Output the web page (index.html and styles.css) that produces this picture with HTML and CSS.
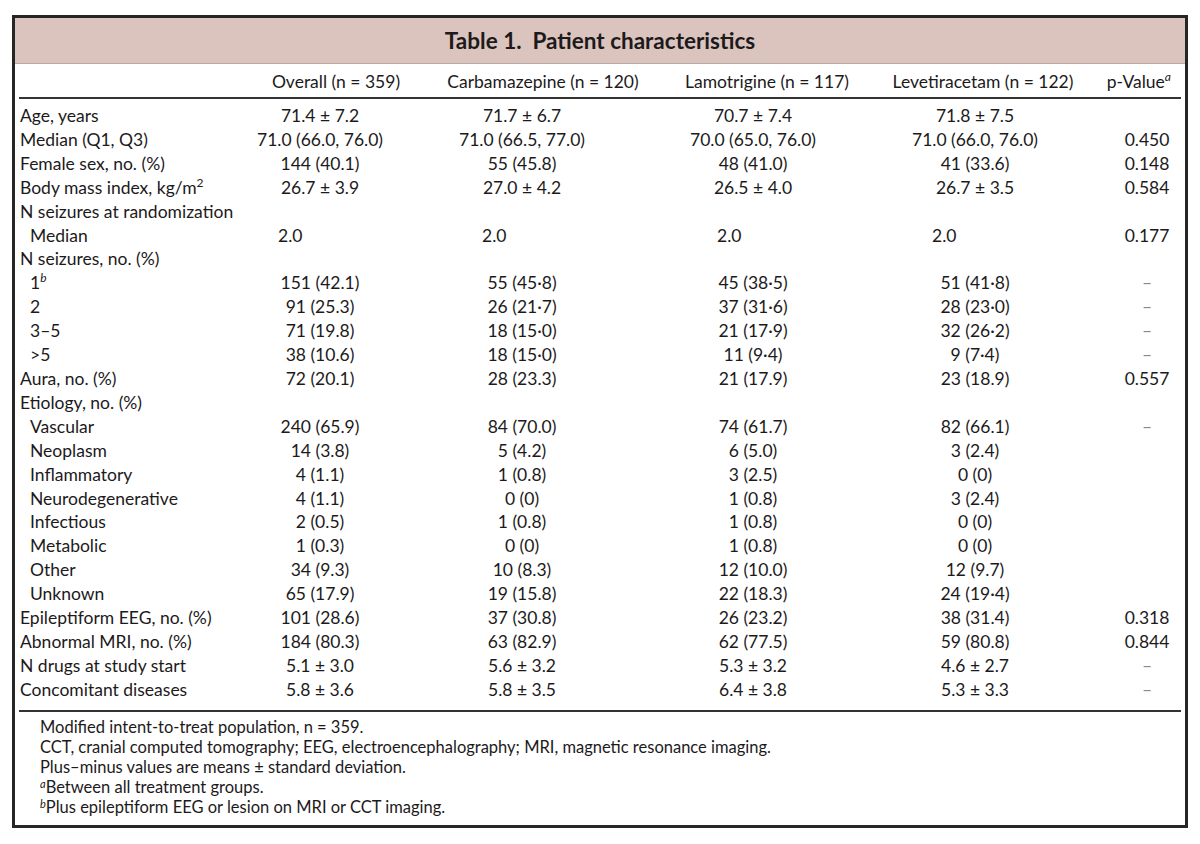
FILE: index.html
```html
<!DOCTYPE html>
<html lang="en">
<head>
<meta charset="utf-8">
<title>Table 1. Patient characteristics</title>
<link rel="stylesheet" href="styles.css">
</head>
<body>
<div class="frame">
  <div class="title">Table 1.&nbsp; Patient characteristics</div>
  <table class="data">
    <colgroup>
      <col class="c-label"><col class="c-all"><col class="c-cbz"><col class="c-ltg"><col class="c-lev"><col class="c-p">
    </colgroup>
    <thead>
      <tr>
        <th></th>
        <th>Overall (n = 359)</th>
        <th>Carbamazepine (n = 120)</th>
        <th>Lamotrigine (n = 117)</th>
        <th>Levetiracetam (n = 122)</th>
        <th class="p">p-Value<sup class="it">a</sup></th>
      </tr>
    </thead>
    <tbody>
      <tr class="first"><td>Age, years</td><td>71.4 ± 7.2</td><td>71.7 ± 6.7</td><td>70.7 ± 7.4</td><td>71.8 ± 7.5</td><td class="p"></td></tr>
      <tr><td>Median (Q1, Q3)</td><td>71.0 (66.0, 76.0)</td><td>71.0 (66.5, 77.0)</td><td>70.0 (65.0, 76.0)</td><td>71.0 (66.0, 76.0)</td><td class="p">0.450</td></tr>
      <tr><td>Female sex, no. (%)</td><td>144 (40.1)</td><td>55 (45.8)</td><td>48 (41.0)</td><td>41 (33.6)</td><td class="p">0.148</td></tr>
      <tr><td>Body mass index, kg/m<sup>2</sup></td><td>26.7 ± 3.9</td><td>27.0 ± 4.2</td><td>26.5 ± 4.0</td><td>26.7 ± 3.5</td><td class="p">0.584</td></tr>
      <tr><td>N seizures at randomization</td><td></td><td></td><td></td><td></td><td class="p"></td></tr>
      <tr class="sub left"><td>Median</td><td>2.0</td><td>2.0</td><td>2.0</td><td>2.0</td><td class="p">0.177</td></tr>
      <tr><td>N seizures, no. (%)</td><td></td><td></td><td></td><td></td><td class="p"></td></tr>
      <tr class="sub"><td>1<sup class="it">b</sup></td><td>151 (42.1)</td><td>55 (45·8)</td><td>45 (38·5)</td><td>51 (41·8)</td><td class="p dash">–</td></tr>
      <tr class="sub"><td>2</td><td>91 (25.3)</td><td>26 (21·7)</td><td>37 (31·6)</td><td>28 (23·0)</td><td class="p dash">–</td></tr>
      <tr class="sub"><td>3–5</td><td>71 (19.8)</td><td>18 (15·0)</td><td>21 (17·9)</td><td>32 (26·2)</td><td class="p dash">–</td></tr>
      <tr class="sub"><td>&gt;5</td><td>38 (10.6)</td><td>18 (15·0)</td><td>11 (9·4)</td><td>9 (7·4)</td><td class="p dash">–</td></tr>
      <tr><td>Aura, no. (%)</td><td>72 (20.1)</td><td>28 (23.3)</td><td>21 (17.9)</td><td>23 (18.9)</td><td class="p">0.557</td></tr>
      <tr><td>Etiology, no. (%)</td><td></td><td></td><td></td><td></td><td class="p"></td></tr>
      <tr class="sub"><td>Vascular</td><td>240 (65.9)</td><td>84 (70.0)</td><td>74 (61.7)</td><td>82 (66.1)</td><td class="p dash">–</td></tr>
      <tr class="sub"><td>Neoplasm</td><td>14 (3.8)</td><td>5 (4.2)</td><td>6 (5.0)</td><td>3 (2.4)</td><td class="p"></td></tr>
      <tr class="sub"><td>Inflammatory</td><td>4 (1.1)</td><td>1 (0.8)</td><td>3 (2.5)</td><td>0 (0)</td><td class="p"></td></tr>
      <tr class="sub"><td>Neurodegenerative</td><td>4 (1.1)</td><td>0 (0)</td><td>1 (0.8)</td><td>3 (2.4)</td><td class="p"></td></tr>
      <tr class="sub"><td>Infectious</td><td>2 (0.5)</td><td>1 (0.8)</td><td>1 (0.8)</td><td>0 (0)</td><td class="p"></td></tr>
      <tr class="sub"><td>Metabolic</td><td>1 (0.3)</td><td>0 (0)</td><td>1 (0.8)</td><td>0 (0)</td><td class="p"></td></tr>
      <tr class="sub"><td>Other</td><td>34 (9.3)</td><td>10 (8.3)</td><td>12 (10.0)</td><td>12 (9.7)</td><td class="p"></td></tr>
      <tr class="sub"><td>Unknown</td><td>65 (17.9)</td><td>19 (15.8)</td><td>22 (18.3)</td><td>24 (19·4)</td><td class="p"></td></tr>
      <tr><td>Epileptiform EEG, no. (%)</td><td>101 (28.6)</td><td>37 (30.8)</td><td>26 (23.2)</td><td>38 (31.4)</td><td class="p">0.318</td></tr>
      <tr><td>Abnormal MRI, no. (%)</td><td>184 (80.3)</td><td>63 (82.9)</td><td>62 (77.5)</td><td>59 (80.8)</td><td class="p">0.844</td></tr>
      <tr><td>N drugs at study start</td><td>5.1 ± 3.0</td><td>5.6 ± 3.2</td><td>5.3 ± 3.2</td><td>4.6 ± 2.7</td><td class="p dash">–</td></tr>
      <tr class="last"><td>Concomitant diseases</td><td>5.8 ± 3.6</td><td>5.8 ± 3.5</td><td>6.4 ± 3.8</td><td>5.3 ± 3.3</td><td class="p dash">–</td></tr>
    </tbody>
  </table>
  <div class="notes">
    <p>Modified intent-to-treat population, n = 359.</p>
    <p>CCT, cranial computed tomography; EEG, electroencephalography; MRI, magnetic resonance imaging.</p>
    <p>Plus–minus values are means ± standard deviation.</p>
    <p><sup class="it">a</sup>Between all treatment groups.</p>
    <p><sup class="it">b</sup>Plus epileptiform EEG or lesion on MRI or CCT imaging.</p>
  </div>
</div>
</body>
</html>
```

FILE: styles.css
```css
html, body {
  margin: 0;
  padding: 0;
  background: #ffffff;
}

body {
  font-family: "Lato", "Open Sans", "Liberation Sans", sans-serif;
  color: #1c1a1b;
  font-size: 17.5px;
}

.frame {
  box-sizing: border-box;
  width: 1176px;
  margin: 15px 0 0 12px;
  border: 3px solid #262626;
}

.title {
  height: 45px;
  line-height: 46px;
  background: #dbc3be;
  border-bottom: 1px solid #b9aaa7;
  text-align: center;
  font-weight: 700;
  font-size: 22.5px;
}

.data {
  width: 1162px;
  margin: 0 4px;
  border-collapse: collapse;
  table-layout: fixed;
}

.c-label { width: 231px; }
.c-all { width: 172px; }
.c-cbz { width: 242px; }
.c-ltg { width: 206px; }
.c-lev { width: 226px; }
.c-p { width: 85px; }

.data th {
  font-weight: 400;
  height: 32px;
  padding: 1px 0 0 0;
  text-align: center;
  white-space: nowrap;
  border-bottom: 2px solid #333333;
}

.data th.p {
  text-align: right;
  padding-right: 10px;
}

.data td {
  height: 23.9px;
  padding: 0;
  line-height: 23.9px;
  text-align: center;
  white-space: nowrap;
}

.data td:first-child {
  text-align: left;
  padding-left: 1px;
}

.data tr.sub td:first-child {
  padding-left: 11px;
}

.data td:nth-child(2) { padding-right: 32px; }
.data td:nth-child(3) { padding-right: 42px; }
.data td:nth-child(4) { padding-right: 28px; }
.data td:nth-child(5) { padding-right: 16px; }

.data td.p {
  text-align: center;
  padding-left: 17px;
}

.data td.dash {
  color: #8a8a8a;
}

.data tr.left td:nth-child(2) { text-align: left; padding: 0 0 0 28px; }
.data tr.left td:nth-child(3) { text-align: left; padding: 0 0 0 60px; }
.data tr.left td:nth-child(4) { text-align: left; padding: 0 0 0 53px; }
.data tr.left td:nth-child(5) { text-align: left; padding: 0 0 0 62px; }

.data tr.first td {
  height: 28.9px;
  padding-top: 5px;
  box-sizing: border-box;
}

.data tr.last td {
  border-bottom: 2px solid #333333;
  padding-bottom: 8px;
}

sup {
  font-size: 12px;
  line-height: 0;
  vertical-align: 7px;
}

sup.it {
  font-style: italic;
}

.notes {
  padding: 5px 0 8px 25px;
  font-size: 16.5px;
}

.notes p {
  margin: 0;
  line-height: 20px;
}

.notes sup {
  font-size: 11px;
  vertical-align: 5px;
}
```
